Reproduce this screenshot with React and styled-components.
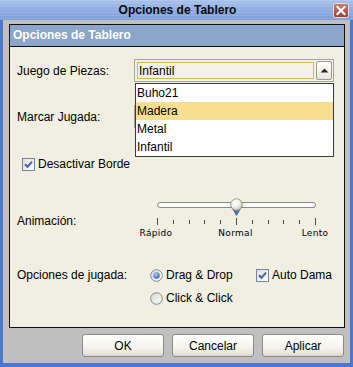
import React, { useId } from "react";
import styled, { createGlobalStyle } from "styled-components";

const GlobalStyle = createGlobalStyle`
  html, body { margin: 0; padding: 0; }
  body {
    font-family: "Liberation Sans", Arial, sans-serif;
    font-size: 12px;
    color: #000;
    background: #c0c0c0;
  }
`;

const Window = styled.div`
  width: 353px;
  height: 367px;
  display: flex;
  flex-direction: column;
  background: #c0c0c0;
  overflow: hidden;
`;

const TitleBar = styled.div`
  height: 20px;
  flex: none;
  display: grid;
  grid-template-columns: 1fr auto 1fr;
  align-items: center;
  background:
    repeating-linear-gradient(to bottom, rgba(255,255,255,0.10) 0 1px, transparent 1px 3px),
    linear-gradient(to bottom, #a9c3ec 0%, #90aee3 45%, #7c9fdc 100%);
`;

const Title = styled.div`
  grid-column: 2;
  font-weight: bold;
  font-size: 12px;
  color: #0a0a0a;
  padding-left: 2px;
`;

const CloseBtn = styled.div`
  grid-column: 3;
  justify-self: end;
  margin-right: 4px;
  width: 16px;
  height: 15px;
  display: flex;
`;

const Frame = styled.div`
  flex: 1;
  display: flex;
  flex-direction: column;
  border: 3px solid #4a78d0;
  border-top: none;
  border-bottom-width: 4px;
  padding: 4px 5px 0 6px;
`;

const Panel = styled.div`
  height: 304px;
  box-sizing: border-box;
  border: 1px solid #101010;
  background: #f1efe2;
  display: flex;
  flex-direction: column;
`;

const PanelHeader = styled.div`
  height: 21px;
  line-height: 21px;
  flex: none;
  background: #8ba5cb;
  border-bottom: 1px solid #101010;
  color: #fff;
  font-weight: bold;
  font-size: 12px;
  padding-left: 3px;
`;

const Body = styled.div`
  flex: 1;
  display: flex;
  flex-direction: column;
  padding-left: 7px;
`;

const Row = styled.div`
  display: flex;
  align-items: ${(p) => p.$align || "center"};
  height: ${(p) => p.$h}px;
  margin-top: ${(p) => p.$mt}px;
  padding-left: ${(p) => p.$pl || 0}px;
`;

const Label = styled.div`
  width: ${(p) => p.$w || 117}px;
  flex: none;
  margin-top: ${(p) => p.$mt || 0}px;
`;

const ComboWrap = styled.div`
  position: relative;
  width: 200px;
  height: 23px;
  z-index: ${(p) => (p.$open ? 2 : 1)};
`;

const ComboBox = styled.div`
  box-sizing: border-box;
  width: 100%;
  height: 100%;
  display: flex;
  align-items: center;
  gap: 2px;
  padding: 1px 1px 1px 2px;
  border: 1px solid #a4a499;
  background: #f3f2ea;
`;

const ComboField = styled.div`
  flex: 1;
  height: 17px;
  line-height: 17px;
  box-sizing: border-box;
  border: 1px solid #d9b65a;
  background: #f4f2e5;
  padding-left: 1px;
`;

const ArrowButton = styled.div`
  width: 16px;
  height: 19px;
  box-sizing: border-box;
  border: 1px solid #9c9b93;
  border-radius: 2px;
  background: linear-gradient(to bottom, #ffffff, #e8e6de);
  display: flex;
  align-items: center;
  justify-content: center;
`;

const DropList = styled.div`
  position: absolute;
  top: 24px;
  left: 1px;
  width: 199px;
  box-sizing: border-box;
  border: 1px solid #3a3a3a;
  background: #fff;
`;

const DropItem = styled.div`
  height: 18px;
  line-height: 18px;
  padding-left: 1px;
  background: ${(p) => (p.$sel ? "#f9de8f" : "#fff")};
`;

const CheckLabel = styled.label`
  display: flex;
  align-items: center;
  gap: 3px;
`;

const SliderBlock = styled.div`
  width: 190px;
  display: flex;
  flex-direction: column;
  margin-left: 3px;
`;

const TrackZone = styled.div`
  position: relative;
  height: 22px;
  width: 159px;
  margin-left: 20px;
`;

const Track = styled.div`
  margin-top: 7px;
  height: 6px;
  box-sizing: border-box;
  border: 1px solid #8c8b80;
  border-radius: 3px;
  background: #fbfbf8;
`;

const Thumb = styled.div`
  position: absolute;
  top: 3px;
  left: ${(p) => p.$x}px;
  width: 13px;
  height: 18px;
  display: flex;
`;

const TickRow = styled.div`
  height: 9px;
  width: 159px;
  margin-left: 20px;
  display: flex;
  justify-content: space-between;
  align-items: center;
`;

const Tick = styled.div`
  width: 1px;
  height: ${(p) => (p.$major ? 7 : 4)}px;
  background: #4a4a4a;
`;

const ScaleLabels = styled.div`
  display: flex;
  justify-content: space-between;
  width: 219px;
  margin-left: -11px;
  height: 14px;
  line-height: 14px;
`;

const ScaleLabel = styled.div`
  width: 60px;
  text-align: center;
  font-family: "DejaVu Sans", Verdana, sans-serif;
  font-size: 9px;
  letter-spacing: 0.3px;
`;

const OptionsGrid = styled.div`
  display: grid;
  grid-template-columns: 106px auto;
  grid-auto-rows: 16px;
  row-gap: 7px;
  margin-left: 16px;
  align-items: center;
`;

const ButtonBar = styled.div`
  display: flex;
  justify-content: flex-end;
  gap: 8px;
  margin-top: 6px;
  margin-right: 1px;
`;

const Button = styled.button`
  width: 82px;
  height: 23px;
  box-sizing: border-box;
  border: 1px solid #8c8b84;
  border-radius: 3px;
  background: linear-gradient(to bottom, #ffffff 0%, #f6f5f0 55%, #e6e3da 90%, #d6d2c6 100%);
  font-family: "Liberation Sans", Arial, sans-serif;
  font-size: 12px;
  color: #000;
  padding: 0;
`;

function CloseIcon() {
  const id = useId();
  return (
    <svg width="16" height="15" viewBox="0 0 16 15">
      <defs>
        <linearGradient id={id} x1="0" y1="0" x2="0" y2="1">
          <stop offset="0" stopColor="#cf7a70" />
          <stop offset="1" stopColor="#9c3e36" />
        </linearGradient>
      </defs>
      <rect x="0.5" y="0.5" width="15" height="14" rx="2" fill={`url(#${id})`} stroke="#e9ddd8" />
      <path d="M4.5 4 L11.5 11 M11.5 4 L4.5 11" stroke="#fff" strokeWidth="2.2" strokeLinecap="square" />
    </svg>
  );
}

function UpArrow() {
  return (
    <svg width="9" height="5" viewBox="0 0 9 5">
      <path d="M0.5 4.5 L4.5 0.5 L8.5 4.5 Z" fill="#2a2a2a" />
    </svg>
  );
}

function CheckBox({ checked }) {
  const id = useId();
  return (
    <svg width="13" height="13" viewBox="0 0 13 13">
      <defs>
        <linearGradient id={id} x1="0" y1="0" x2="1" y2="1">
          <stop offset="0" stopColor="#dcdcd4" />
          <stop offset="1" stopColor="#ffffff" />
        </linearGradient>
      </defs>
      <rect x="0.5" y="0.5" width="12" height="12" fill={`url(#${id})`} stroke="#6f84a6" />
      {checked && (
        <path d="M3 6.2 L5.5 8.8 L10 3.6" stroke="#3d61b6" strokeWidth="2" fill="none" />
      )}
    </svg>
  );
}

function Radio({ checked }) {
  const id = useId();
  const dot = useId();
  return (
    <svg width="13" height="13" viewBox="0 0 13 13">
      <defs>
        <linearGradient id={id} x1="0" y1="0" x2="1" y2="1">
          <stop offset="0" stopColor="#d6d6ce" />
          <stop offset="1" stopColor="#ffffff" />
        </linearGradient>
        <radialGradient id={dot} cx="40%" cy="35%" r="65%">
          <stop offset="0" stopColor="#b4ccf4" />
          <stop offset="1" stopColor="#3560c0" />
        </radialGradient>
      </defs>
      <circle cx="6.5" cy="6.5" r="5.8" fill={`url(#${id})`} stroke="#7d8896" />
      {checked && <circle cx="6.5" cy="6.5" r="3.2" fill={`url(#${dot})`} />}
    </svg>
  );
}

function ThumbIcon() {
  const id = useId();
  return (
    <svg width="13" height="18" viewBox="0 0 13 18">
      <defs>
        <radialGradient id={id} cx="40%" cy="35%" r="70%">
          <stop offset="0" stopColor="#ffffff" />
          <stop offset="0.55" stopColor="#f1f1ea" />
          <stop offset="1" stopColor="#b3b2a6" />
        </radialGradient>
      </defs>
      <path d="M1.2 8.5 L6.5 17.6 L11.8 8.5 Z" fill="#4a70b8" stroke="#3a5a9a" strokeWidth="0.6" />
      <circle cx="6.5" cy="6.6" r="5.8" fill={`url(#${id})`} stroke="#8a897e" strokeWidth="0.8" />
    </svg>
  );
}

const pieces = ["Buho21", "Madera", "Metal", "Infantil"];

function Combo({ value, open, items, selected }) {
  return (
    <ComboWrap $open={open}>
      <ComboBox>
        <ComboField>{value}</ComboField>
        <ArrowButton>
          <UpArrow />
        </ArrowButton>
      </ComboBox>
      {open && (
        <DropList>
          {items.map((it) => (
            <DropItem key={it} $sel={it === selected}>
              {it}
            </DropItem>
          ))}
        </DropList>
      )}
    </ComboWrap>
  );
}

export default function App() {
  const ticks = Array.from({ length: 11 }, (_, i) => i);
  return (
    <>
      <GlobalStyle />
      <Window>
        <TitleBar>
          <Title>Opciones de Tablero</Title>
          <CloseBtn>
            <CloseIcon />
          </CloseBtn>
        </TitleBar>
        <Frame>
          <Panel>
            <PanelHeader>Opciones de Tablero</PanelHeader>
            <Body>
              <Row $h={23} $mt={12}>
                <Label>Juego de Piezas:</Label>
                <Combo value="Infantil" open items={pieces} selected="Madera" />
              </Row>
              <Row $h={23} $mt={23}>
                <Label>Marcar Jugada:</Label>
                <Combo value="" />
              </Row>
              <Row $h={14} $mt={29} $pl={5}>
                <CheckLabel>
                  <CheckBox checked />
                  Desactivar Borde
                </CheckLabel>
              </Row>
              <Row $h={44} $mt={24} $align="flex-start">
                <Label $w={117} $mt={19}>Animación:</Label>
                <SliderBlock>
                  <TrackZone>
                    <Track />
                    <Thumb $x={73}>
                      <ThumbIcon />
                    </Thumb>
                  </TrackZone>
                  <TickRow>
                    {ticks.map((t) => (
                      <Tick key={t} $major={t === 0 || t === 5 || t === 10} />
                    ))}
                  </TickRow>
                  <ScaleLabels>
                    <ScaleLabel>Rápido</ScaleLabel>
                    <ScaleLabel>Normal</ScaleLabel>
                    <ScaleLabel>Lento</ScaleLabel>
                  </ScaleLabels>
                </SliderBlock>
              </Row>
              <Row $h={39} $mt={28} $align="flex-start">
                <Label $mt={1}>Opciones de jugada:</Label>
                <OptionsGrid>
                  <CheckLabel>
                    <Radio checked />
                    Drag &amp; Drop
                  </CheckLabel>
                  <CheckLabel>
                    <CheckBox checked />
                    Auto Dama
                  </CheckLabel>
                  <CheckLabel>
                    <Radio />
                    Click &amp; Click
                  </CheckLabel>
                </OptionsGrid>
              </Row>
            </Body>
          </Panel>
          <ButtonBar>
            <Button>OK</Button>
            <Button>Cancelar</Button>
            <Button>Aplicar</Button>
          </ButtonBar>
        </Frame>
      </Window>
    </>
  );
}
